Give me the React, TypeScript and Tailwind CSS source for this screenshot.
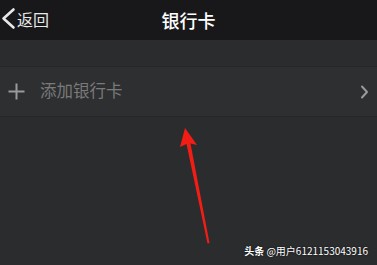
const font = { fontFamily: '"Noto Sans CJK SC", "Noto Sans", sans-serif' }

export default function App() {
  return (
    <div className="relative w-[377px] h-[265px] overflow-hidden bg-[#2b2c2e]" style={font}>
      {/* header */}
      <div className="relative flex items-center h-[40px] bg-[#18181a]">
        <div className="flex items-center text-[#e8e8e8]">
          <svg width="17" height="40" viewBox="0 0 17 40" className="shrink-0">
            <polyline points="13.5,9.5 3.5,18.5 13.5,27.5" fill="none" stroke="currentColor" strokeWidth="2.6" strokeLinecap="round" strokeLinejoin="round" />
          </svg>
          <span className="text-[16px] leading-none -mt-[2px]">返回</span>
        </div>
        <div className="absolute inset-0 flex items-center justify-center text-white text-[18px] font-medium">
          银行卡
        </div>
      </div>

      <div className="h-[26px]" />

      {/* add card row */}
      <div className="flex items-center h-[51px] bg-[#2e2f31] border-t border-b border-[#262729] pl-[8px] pr-[8px]">
        <svg width="17" height="17" viewBox="0 0 17 17" className="shrink-0 text-[#9a9a9a]">
          <path d="M8.5 0.5 V16.5 M0.5 8.5 H16.5" stroke="currentColor" strokeWidth="2" />
        </svg>
        <span className="ml-[15px] text-[16.5px] leading-none -mt-[2px] text-[#7a7a7a]">添加银行卡</span>
        <div className="flex-1" />
        <svg width="9" height="14" viewBox="0 0 9 14" className="shrink-0 text-[#9a9a9a]">
          <polyline points="2,1.5 7,7 2,12.5" fill="none" stroke="currentColor" strokeWidth="2" strokeLinecap="round" strokeLinejoin="round" />
        </svg>
      </div>

      {/* annotation arrow */}
      <svg className="absolute left-0 top-0" width="377" height="265" viewBox="0 0 377 265">
        <path d="M209.5 243 L190.5 143.5 L197 145 L185 128 L180 147 L186.5 144 L207.5 243.5 Z" fill="#f21d15" />
      </svg>

      {/* watermark */}
      <div className="absolute right-[9px] bottom-[9px] text-white text-[10px] leading-none" style={{ textShadow: '0 0 2px rgba(0,0,0,0.8)' }}>
        <span className="font-bold">头条</span> @用户6121153043916
      </div>
    </div>
  )
}
